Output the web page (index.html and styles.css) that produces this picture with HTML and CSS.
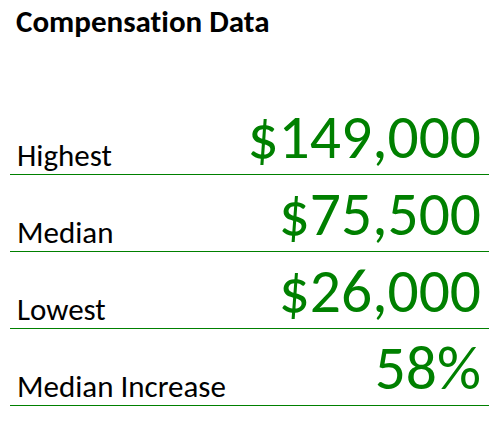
FILE: index.html
```html
<!DOCTYPE html>
<html lang="en">
<head>
  <meta charset="UTF-8" />
  <title>Compensation Data</title>
  <link rel="stylesheet" href="styles.css">
</head>
<body>
  <div class="sheet">
    <div class="title">Compensation Data</div>
    <div class="rows">
      <div class="row">
        <span class="label">Highest</span>
        <span class="value">$149,000</span>
      </div>
      <div class="row">
        <span class="label">Median</span>
        <span class="value">$75,500</span>
      </div>
      <div class="row">
        <span class="label">Lowest</span>
        <span class="value">$26,000</span>
      </div>
      <div class="row">
        <span class="label">Median Increase</span>
        <span class="value">58%</span>
      </div>
    </div>
  </div>
</body>
</html>
```

FILE: styles.css
```css
body {
  margin: 0;
  background: #fff;
  font-family: Carlito, Lato, sans-serif;
  font-variant-ligatures: none;
  color: #000;
}
.sheet {
  width: 498px;
  padding-top: 6px;
}
.title {
  font-size: 31px;
  font-weight: 700;
  line-height: 1;
  padding-left: 16px;
  margin-bottom: 61px;
}
.rows {
  margin-left: 10px;
  width: 479px;
  display: flex;
  flex-direction: column;
}
.row {
  height: 76px;
  border-bottom: 1px solid #008000;
  display: flex;
  justify-content: space-between;
  align-items: flex-end;
}
.label {
  font-size: 31px;
  line-height: 1;
  padding-left: 7px;
  padding-bottom: 3px;
}
.value {
  font-size: 61.5px;
  line-height: 1;
  color: #008000;
  padding-right: 8px;
  padding-bottom: 6px;
}
```
